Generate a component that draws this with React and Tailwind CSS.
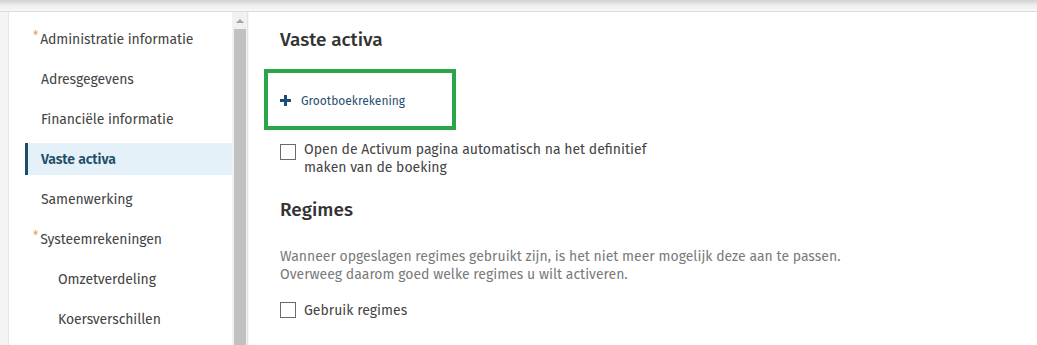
const items = [
  { label: "Administratie informatie", required: true },
  { label: "Adresgegevens" },
  { label: "Financiële informatie" },
  { label: "Vaste activa", active: true },
  { label: "Samenwerking" },
  { label: "Systeemrekeningen", required: true },
  { label: "Omzetverdeling", sub: true },
  { label: "Koersverschillen", sub: true },
];

const Checkbox = () => (
  <span className="mt-[2px] inline-block w-[16px] h-[16px] shrink-0 border border-[#6b6b6b] bg-white" />
);

const App = () => {
  return (
    <div
      className="w-[1037px] h-[345px] overflow-hidden bg-white text-[#333] flex flex-col"
      style={{ fontFamily: '"Fira Sans", "Open Sans", "Noto Sans", sans-serif' }}
    >
      {/* bovenbalk */}
      <div className="h-[12px] shrink-0 bg-gradient-to-b from-[#d2d2d2] via-[#efefef] to-[#f7f7f7] border-b border-[#dcdcdc]" />

      <div className="flex flex-1 min-h-0">
        {/* linker kolom */}
        <div className="w-[9px] shrink-0 bg-[#f4f4f4] border-r border-[#e6e6e6]" />
        <div className="w-[223px] shrink-0 bg-white pt-[11px] pl-[16px] flex flex-col gap-[8px]">
          {items.map((item) => (
            <div
              key={item.label}
              className={`h-[32px] shrink-0 flex items-center text-[14px] tracking-[-0.1px] ${
                item.active
                  ? "bg-[#e5f1f9] border-l-[3px] border-[#1d4e66] text-[#1d4e66] font-semibold pl-[13px]"
                  : "text-[#444] pl-[16px]"
              } ${item.sub ? "pl-[33px]" : ""}`}
            >
              {item.required && (
                <span className="text-[#e8a060] text-[12px] -ml-[8px] mr-[2px] self-start mt-[7px] leading-none">
                  *
                </span>
              )}
              {item.label}
            </div>
          ))}
        </div>

        {/* scrollbar */}
        <div className="w-[15px] shrink-0 bg-[#f1f1f1] flex flex-col items-center">
          <div className="h-[17px] flex items-center justify-center">
            <span className="w-0 h-0 border-l-[4px] border-r-[4px] border-b-[4px] border-l-transparent border-r-transparent border-b-[#a3a3a3]" />
          </div>
          <div className="w-[12px] flex-1 bg-[#c1c1c1]" />
        </div>
        <div className="w-[2px] shrink-0 bg-[#f4f4f4] border-l border-[#e3e3e3]" />

        {/* inhoud */}
        <div className="flex-1 pl-[31px] pt-[15px]">
          <h2 className="text-[19px] font-medium text-[#333] leading-[26px]">Vaste activa</h2>

          <div className="mt-[16px] -ml-[16px] w-[192px] h-[61px] border-[4px] border-[#2ca54a] flex items-center pl-[12px] pt-[2px]">
            <svg width="11" height="11" viewBox="0 0 11 11" className="shrink-0">
              <rect x="4" y="0" width="3" height="11" fill="#1d4e7a" />
              <rect x="0" y="4" width="11" height="3" fill="#1d4e7a" />
            </svg>
            <span className="ml-[10px] text-[12px] text-[#2a4f6f]">Grootboekrekening</span>
          </div>

          <div className="mt-[12px] flex gap-[8px] text-[14px] leading-[18px] text-[#444]">
            <Checkbox />
            <span className="w-[370px] -mt-[1px]">
              Open de Activum pagina automatisch na het definitief maken van de boeking
            </span>
          </div>

          <h2 className="mt-[20px] text-[19px] font-medium text-[#333] leading-[26px]">Regimes</h2>

          <p className="mt-[25px] text-[14px] leading-[18px] text-[#7a7a7a]">
            Wanneer opgeslagen regimes gebruikt zijn, is het niet meer mogelijk deze aan te passen.
            <br />
            Overweeg daarom goed welke regimes u wilt activeren.
          </p>

          <div className="mt-[16px] flex gap-[8px] text-[14px] leading-[19px] text-[#444]">
            <Checkbox />
            <span className="mt-[1px]">Gebruik regimes</span>
          </div>
        </div>
      </div>
    </div>
  );
};

export default App;
